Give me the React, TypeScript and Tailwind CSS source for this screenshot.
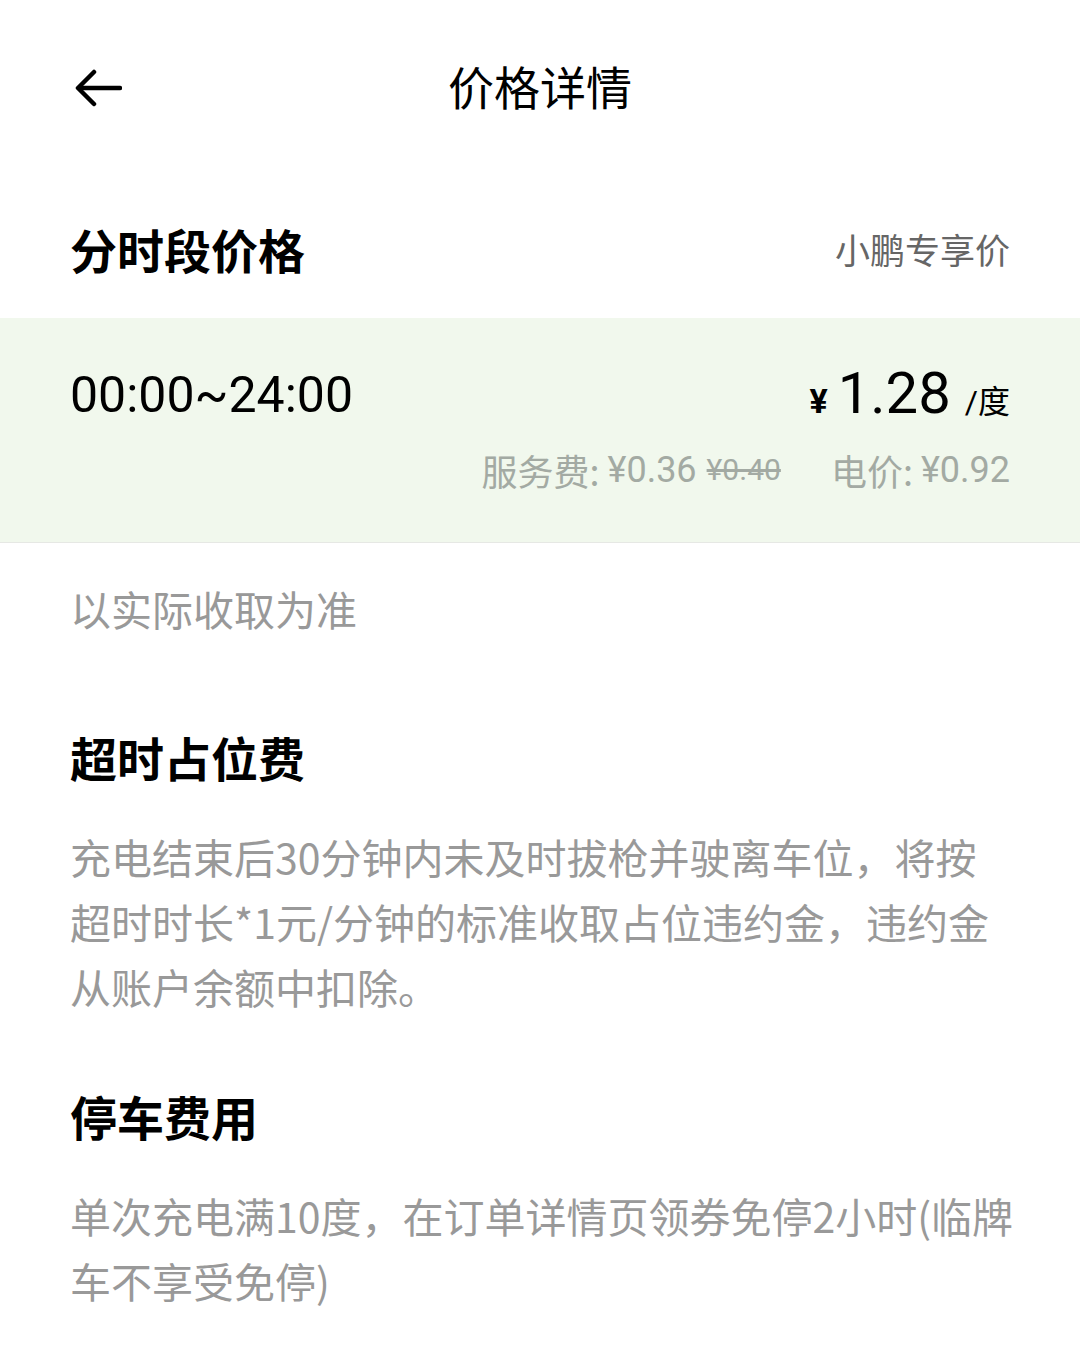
import React from "react";

const cjk = { fontFamily: '"Noto Sans CJK SC", "Noto Sans", sans-serif' };
const num = { fontFamily: 'Roboto, "Noto Sans CJK SC", sans-serif' };

export default function App() {
  return (
    <div className="w-[1080px] min-h-[1371px] bg-white text-black" style={cjk}>
      {/* Header */}
      <div className="relative h-[176px] flex items-center justify-center pb-[6px]">
        <div className="absolute left-[74px] top-[69px]">
          <svg width="48" height="38" viewBox="0 0 48 38" fill="none">
            <path d="M46 19H5" stroke="#000" strokeWidth="4.5" strokeLinecap="round" />
            <path d="M20 3L4 19L20 35" stroke="#000" strokeWidth="4.5" strokeLinecap="round" strokeLinejoin="round" />
          </svg>
        </div>
        <div className="text-[46px] leading-[60px] font-normal">价格详情</div>
      </div>

      {/* Section 1 title */}
      <div className="h-[142px] flex items-center justify-between px-[70px] pt-[4px]">
        <div className="text-[47px] leading-[60px] font-bold">分时段价格</div>
        <div className="text-[35px] leading-[50px] text-[#666666]">小鹏专享价</div>
      </div>

      {/* Green block */}
      <div className="h-[225px] bg-[#f1f8ed] border-b border-[#e6e8e4] px-[70px] pt-[47px]">
        <div className="h-[60px] flex items-center justify-between">
          <div className="text-[50px] leading-[60px]" style={num}>00:00~24:00</div>
          <div className="flex items-baseline">
            <span className="text-[34px] font-bold mr-[10px]" style={num}>¥</span>
            <span className="text-[58px] leading-[60px]" style={num}>1.28</span>
            <span className="text-[32px] ml-[14px]" style={num}>/度</span>
          </div>
        </div>
        <div className="mt-[25px] h-[40px] flex items-center justify-end text-[#a3aaa3] text-[36px] leading-[40px]">
          <span>服务费: </span>
          <span className="ml-[8px]" style={num}>¥0.36</span>
          <span className="ml-[10px] text-[30px] line-through" style={num}>¥0.40</span>
          <span className="ml-[50px]">电价: </span>
          <span className="ml-[8px]" style={num}>¥0.92</span>
        </div>
      </div>

      <div className="px-[70px]">
        <div className="mt-[40px] text-[41px] leading-[50px] text-[#999999]">以实际收取为准</div>

        <div className="mt-[94px] text-[47px] leading-[60px] font-bold">超时占位费</div>
        <div className="mt-[37px] text-[41px] leading-[65px] text-[#999999]">
          <div className="whitespace-nowrap">充电结束后30分钟内未及时拔枪并驶离车位，将按</div>
          <div className="whitespace-nowrap">超时时长*1元/分钟的标准收取占位违约金，违约金</div>
          <div className="whitespace-nowrap">从账户余额中扣除。</div>
        </div>

        <div className="mt-[67px] text-[47px] leading-[60px] font-bold">停车费用</div>
        <div className="mt-[37px] text-[41px] leading-[65px] text-[#999999]">
          <div className="whitespace-nowrap">单次充电满10度，在订单详情页领券免停2小时(临牌</div>
          <div className="whitespace-nowrap">车不享受免停)</div>
        </div>
      </div>
    </div>
  );
}
